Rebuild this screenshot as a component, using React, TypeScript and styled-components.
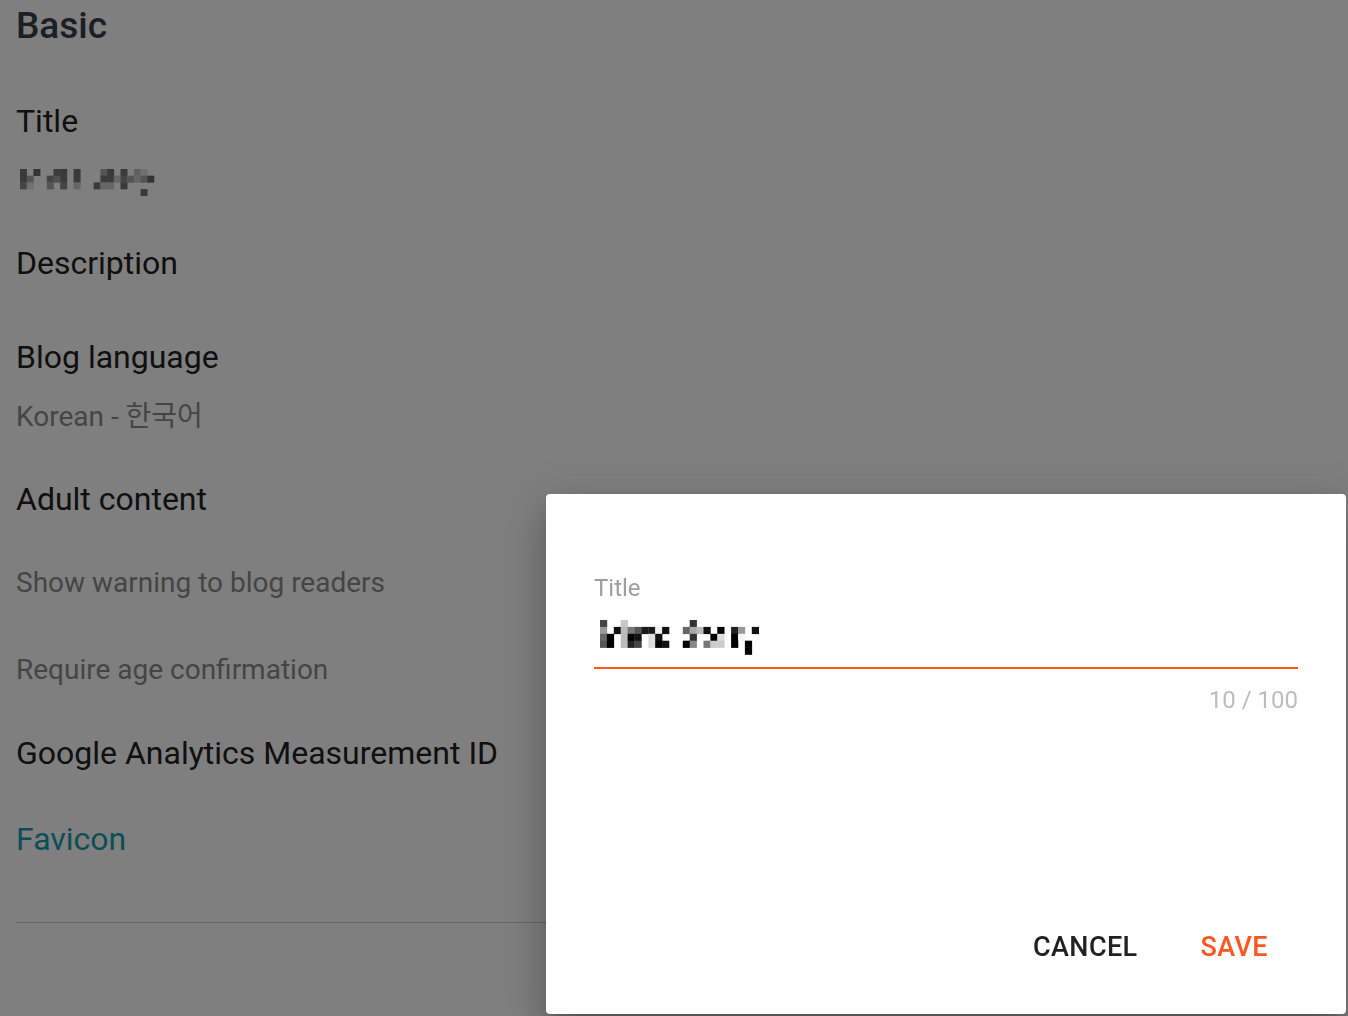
import React from "react";
import styled, { createGlobalStyle } from "styled-components";

const GlobalStyle = createGlobalStyle`
  html, body {
    margin: 0;
    padding: 0;
    background: #fff;
  }
  body {
    font-family: Roboto, "Noto Sans CJK KR", sans-serif;
  }
`;

const Page = styled.main`
  padding: 0 16px;
  min-height: 1016px;
  box-sizing: border-box;
`;

const Heading = styled.h2`
  margin: 4px 0 0;
  font-size: 37px;
  line-height: 44px;
  font-weight: 500;
  color: #37414b;
`;

const SettingTitle = styled.div<{ $top: number; $link?: boolean }>`
  margin-top: ${(p) => p.$top}px;
  font-size: 32px;
  line-height: 40px;
  color: ${(p) => (p.$link ? "#179faa" : "#212121")};
`;

const SettingValue = styled.div<{ $top: number }>`
  margin-top: ${(p) => p.$top}px;
  font-size: 28px;
  line-height: 27px;
  color: #8a8a8a;
`;

const MosaicBox = styled.div<{ $top: number }>`
  margin-top: ${(p) => p.$top}px;
  line-height: 0;

  svg {
    display: block;
  }
`;

const Divider = styled.hr<{ $top: number }>`
  margin: ${(p) => p.$top}px 0 0;
  border: 0;
  border-top: 1px solid #cccccc;
`;

const Overlay = styled.div`
  position: fixed;
  inset: 0;
  background: rgba(0, 0, 0, 0.5);
`;

const Dialog = styled.section`
  position: fixed;
  left: 546px;
  top: 494px;
  width: 800px;
  height: 520px;
  box-sizing: border-box;
  padding: 80px 48px 41px;
  display: flex;
  flex-direction: column;
  background: #fff;
  border-radius: 4px;
  box-shadow: 0 11px 15px -7px rgba(0, 0, 0, 0.2),
    0 24px 38px 3px rgba(0, 0, 0, 0.14), 0 9px 46px 8px rgba(0, 0, 0, 0.12);
`;

const FieldLabel = styled.label`
  font-size: 24px;
  line-height: 28px;
  color: #9e9e9e;
`;

const FieldInput = styled.div`
  margin-top: 5px;
  padding: 13px 0 11px;
  border-bottom: 2px solid #ff5722;

  svg {
    display: block;
  }
`;

const Counter = styled.div`
  margin-top: 17px;
  text-align: right;
  font-size: 24px;
  line-height: 28px;
  color: #bdbdbd;
`;

const Actions = styled.div`
  margin-top: auto;
  display: flex;
  justify-content: flex-end;
  gap: 3px;
`;

const TextButton = styled.button<{ $color: string }>`
  background: none;
  border: 0;
  padding: 8px 30px;
  font-family: Roboto, sans-serif;
  font-size: 27px;
  line-height: 36px;
  font-weight: 500;
  letter-spacing: 0.4px;
  color: ${(p) => p.$color};
  cursor: pointer;
`;

// blurred-out text, drawn as blocks (null = no block)
type Grid = (string | null)[][];

const _ = null;

const blogTitleBlocks: Grid = [
  ["#747474", _, "#666", _, _, "#787878", "#747474", _, "#747474", _, _, _, "#aaa", "#747474", _, "#747474", _, "#c0c0c0", "#e0e0e0", _],
  ["#747474", "#aaa", _, _, "#888", "#a0a0a0", "#747474", _, "#747474", _, _, _, "#787878", "#787878", "#ccc", "#888", "#aaa", "#ccc", "#aaa", "#666"],
  ["#888", "#e0e0e0", _, _, "#aaa", _, "#888", _, "#ccc", _, _, "#747474", "#ccc", "#ccc", _, "#747474", _, _, _, _],
  [_, _, _, _, _, _, _, _, _, _, _, _, _, _, _, _, _, _, "#747474", _],
];

const inputBlocks: Grid = [
  ["#444", _, _, "#c8c8c8", _, _, _, _, _, _, _, _, _, "#333", _, _, _, _, _, _, _, _, _],
  ["#999", _, "#111", "#bbb", "#777", "#555", "#1a1a1a", "#1a1a1a", "#f2f2f2", "#111", _, _, "#666", "#aaa", "#bbb", "#111", _, "#000", _, "#222", "#999", _, "#111"],
  ["#666", "#000", _, "#bbb", "#000", "#111", _, "#ddd", "#111", _, _, _, _, "#333", _, _, "#000", "#ddd", _, "#000", "#f5f5f5", _, _],
  ["#555", "#000", _, "#bbb", "#222", "#444", _, "#ddd", "#000", "#111", _, _, "#000", "#888", _, "#777", "#ccc", "#ccc", _, "#000", _, "#000", _],
  [_, _, _, _, _, _, _, _, _, _, _, _, _, _, _, _, _, _, _, _, _, "#000", _],
];

const Mosaic = ({
  grid,
  size,
  offsetX,
  width,
  height,
}: {
  grid: Grid;
  size: number;
  offsetX: number;
  width: number;
  height: number;
}) => (
  <svg width={width} height={height} viewBox={`0 0 ${width} ${height}`}>
    {grid.map((row, r) =>
      row.map((c, i) =>
        c ? (
          <rect
            key={`${r}-${i}`}
            x={offsetX + i * size}
            y={r * size}
            width={size + 0.3}
            height={size + 0.3}
            fill={c}
          />
        ) : null
      )
    )}
  </svg>
);

export default function App() {
  return (
    <>
      <GlobalStyle />
      <Page>
        <Heading>Basic</Heading>

        <SettingTitle $top={53}>Title</SettingTitle>
        <MosaicBox $top={28}>
          <Mosaic grid={blogTitleBlocks} size={6.7} offsetX={4} width={144} height={28} />
        </MosaicBox>

        <SettingTitle $top={46}>Description</SettingTitle>

        <SettingTitle $top={54}>Blog language</SettingTitle>
        <SettingValue $top={26}>Korean - 한국어</SettingValue>

        <SettingTitle $top={49}>Adult content</SettingTitle>
        <SettingValue $top={50}>Show warning to blog readers</SettingValue>
        <SettingValue $top={60}>Require age confirmation</SettingValue>

        <SettingTitle $top={50}>Google Analytics Measurement ID</SettingTitle>

        <SettingTitle $top={46} $link>
          Favicon
        </SettingTitle>

        <Divider $top={63} />
      </Page>

      <Overlay />

      <Dialog>
        <FieldLabel>Title</FieldLabel>
        <FieldInput>
          <Mosaic grid={inputBlocks} size={6.9} offsetX={6} width={170} height={36} />
        </FieldInput>
        <Counter>10 / 100</Counter>
        <Actions>
          <TextButton $color="#212121">CANCEL</TextButton>
          <TextButton $color="#ff5722">SAVE</TextButton>
        </Actions>
      </Dialog>
    </>
  );
}
